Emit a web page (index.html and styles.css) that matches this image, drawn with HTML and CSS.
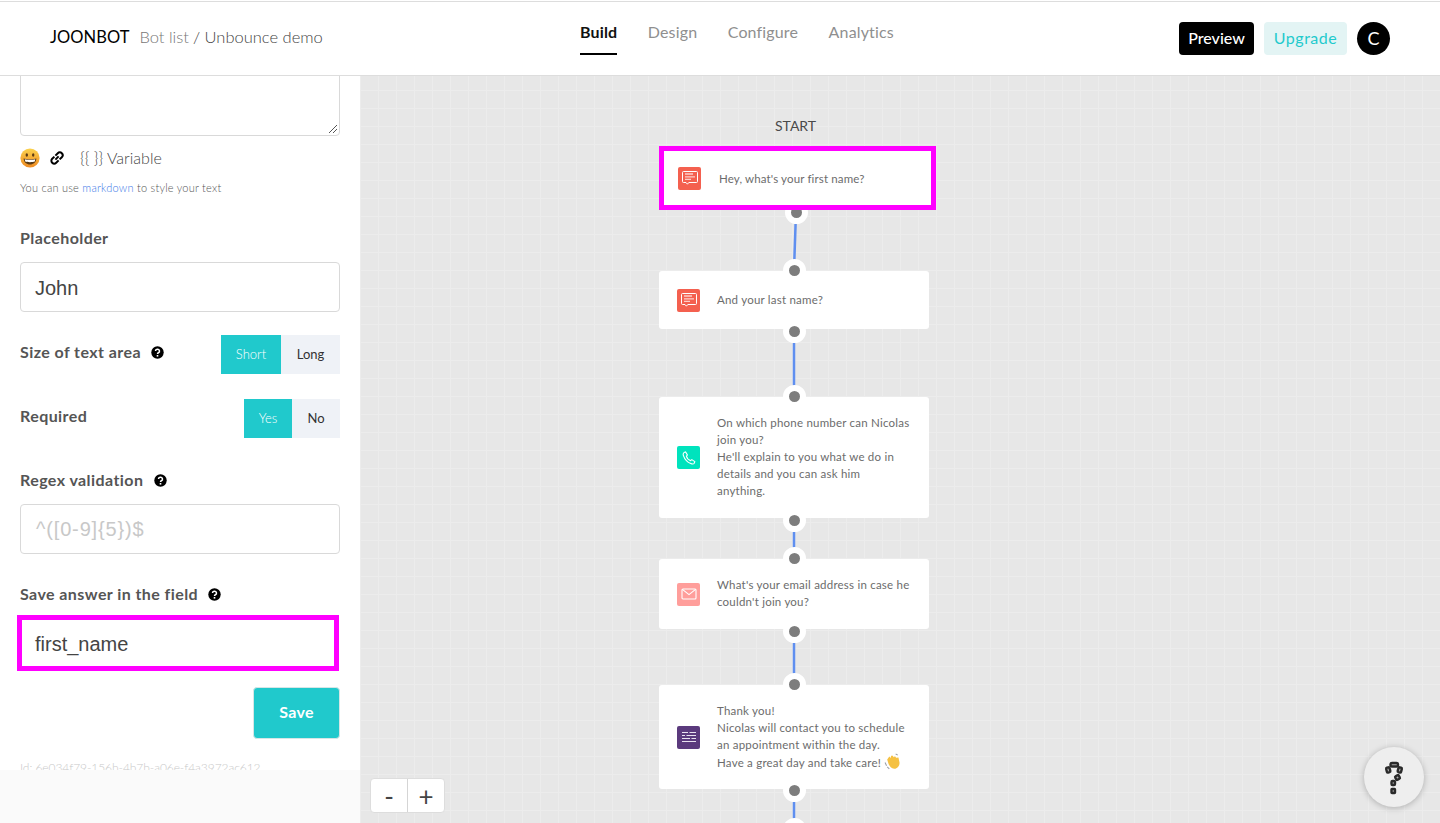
FILE: index.html
```html
<!DOCTYPE html>
<html lang="en">
<head>
<meta charset="utf-8">
<title>Joonbot</title>
<link rel="stylesheet" href="styles.css">
</head>
<body>
<div class="app">
  <header class="topbar">
    <div class="crumbs">
      <span class="brand">JOONBOT</span>
      <span class="crumb-muted">Bot list</span>
      <span class="crumb-path">/ Unbounce demo</span>
    </div>
    <nav class="tabs">
      <a class="tab tab-active">Build</a>
      <a class="tab">Design</a>
      <a class="tab">Configure</a>
      <a class="tab">Analytics</a>
    </nav>
    <div class="actions">
      <button class="btn-preview">Preview</button>
      <button class="btn-upgrade">Upgrade</button>
      <span class="avatar">C</span>
    </div>
  </header>
  <main class="workspace">
    <aside class="sidebar">
      <div class="form">
        <div class="textarea-box">
          <svg class="grip" width="10" height="10" viewBox="0 0 10 10"><path d="M1 9L9 1M5 9L9 5" stroke="#555" stroke-width="1" fill="none"/></svg>
        </div>
        <div class="tools">
          <svg class="emoji" width="20" height="20" viewBox="0 0 20 20">
            <defs><linearGradient id="face" x1="0" y1="0" x2="0" y2="1"><stop offset="0" stop-color="#fbd34e"/><stop offset="1" stop-color="#ee8a22"/></linearGradient></defs>
            <circle cx="10" cy="10" r="9.6" fill="url(#face)"/>
            <ellipse cx="6.8" cy="7" rx="1.2" ry="1.7" fill="#5a3a14"/>
            <ellipse cx="13.2" cy="7" rx="1.2" ry="1.7" fill="#5a3a14"/>
            <path d="M3.6 10.4C6 11.4 14 11.4 16.4 10.4C16.2 14.2 13.4 16.4 10 16.4C6.6 16.4 3.8 14.2 3.6 10.4Z" fill="#5a3a14"/>
            <path d="M4.8 11.2C7 11.9 13 11.9 15.2 11.2L14.8 13.6C12.6 14.3 7.4 14.3 5.2 13.6Z" fill="#fff"/>
          </svg>
          <svg class="link-icon" width="14" height="14" viewBox="0 0 14 14" fill="none" stroke="#000" stroke-width="2"><path d="M5.4 8.6L8.6 5.4"/><path d="M5.4 4.6L7.8 2.2A2.5 2.5 0 0 1 11.8 6.2L9.6 8.4"/><path d="M8.6 9.4L6.2 11.8A2.5 2.5 0 0 1 2.2 7.8L4.4 5.6"/></svg>
          <span class="variable">{{ }} Variable</span>
        </div>
        <p class="hint">You can use <a class="hint-link">markdown</a> to style your text</p>

        <label class="label label-placeholder">Placeholder</label>
        <div class="input input-value">John</div>

        <div class="row row-size">
          <span class="label">Size of text area <svg class="help" width="13" height="13" viewBox="0 0 13 13"><circle cx="6.5" cy="6.5" r="6.2" fill="#000"/><path d="M4.5 5.1A2 1.9 0 1 1 7.4 6.8C6.8 7.1 6.5 7.4 6.5 8" stroke="#fff" stroke-width="1.5" fill="none"/><rect x="5.7" y="9" width="1.6" height="1.6" fill="#fff"/></svg></span>
          <div class="toggle">
            <span class="opt opt-on opt-short">Short</span>
            <span class="opt opt-long">Long</span>
          </div>
        </div>
        <div class="row row-required">
          <span class="label">Required</span>
          <div class="toggle">
            <span class="opt opt-on opt-yes">Yes</span>
            <span class="opt opt-no">No</span>
          </div>
        </div>

        <label class="label label-regex">Regex validation <svg class="help" width="13" height="13" viewBox="0 0 13 13"><circle cx="6.5" cy="6.5" r="6.2" fill="#000"/><path d="M4.5 5.1A2 1.9 0 1 1 7.4 6.8C6.8 7.1 6.5 7.4 6.5 8" stroke="#fff" stroke-width="1.5" fill="none"/><rect x="5.7" y="9" width="1.6" height="1.6" fill="#fff"/></svg></label>
        <div class="input input-ghost">^([0-9]{5})$</div>

        <label class="label label-save">Save answer in the field <svg class="help" width="13" height="13" viewBox="0 0 13 13"><circle cx="6.5" cy="6.5" r="6.2" fill="#000"/><path d="M4.5 5.1A2 1.9 0 1 1 7.4 6.8C6.8 7.1 6.5 7.4 6.5 8" stroke="#fff" stroke-width="1.5" fill="none"/><rect x="5.7" y="9" width="1.6" height="1.6" fill="#fff"/></svg></label>
        <div class="input input-value input-mark">first_name</div>

        <div class="save-row"><button class="btn-save">Save</button></div>
        <p class="bot-id">Id: 6e034f79-156b-4b7b-a06e-f4a3972ac612</p>
      </div>
      <div class="side-foot"></div>
    </aside>

    <section class="canvas">
      <svg class="wires" width="1080" height="747" viewBox="0 0 1080 747" fill="none" stroke="#5f8ff0" stroke-width="2.5">
        <path d="M436 136L434 194"/>
        <path d="M434 255V320"/>
        <path d="M434 444V482"/>
        <path d="M434 555V608"/>
        <path d="M434 715V747"/>
      </svg>

      <div class="start">START</div>

      <article class="node node-1 node-mark">
        <span class="ico ico-red"><svg width="16" height="16" viewBox="0 0 16 16" fill="none" stroke="#fff"><path d="M1.5 1.5H14.5A1 1 0 0 1 15.5 2.5V11.5A1 1 0 0 1 14.5 12.5H6.8L5.4 14.2L4 12.5H1.5A1 1 0 0 1 .5 11.5V2.5A1 1 0 0 1 1.5 1.5Z"/><path d="M3 4H11M3 6.8H13M3 9.4H9" stroke-width="1.3" stroke-opacity=".7"/></svg></span>
        <p>Hey, what's your first name?</p>
      </article>
      <article class="node node-2">
        <span class="ico ico-red"><svg width="16" height="16" viewBox="0 0 16 16" fill="none" stroke="#fff"><path d="M1.5 1.5H14.5A1 1 0 0 1 15.5 2.5V11.5A1 1 0 0 1 14.5 12.5H6.8L5.4 14.2L4 12.5H1.5A1 1 0 0 1 .5 11.5V2.5A1 1 0 0 1 1.5 1.5Z"/><path d="M3 4H11M3 6.8H13M3 9.4H9" stroke-width="1.3" stroke-opacity=".7"/></svg></span>
        <p>And your last name?</p>
      </article>
      <article class="node node-3">
        <span class="ico ico-green"><svg width="14" height="14" viewBox="0 0 14 14" fill="none" stroke="#fff" stroke-width="1.1"><path d="M2 1.6L3.6 1L5.4 4L4.4 5.2C4.8 6.8 6.6 9 8.6 9.6L9.8 8.6L12.8 10.6L12.2 12.2C11.6 13.2 10.2 13.2 8.8 12.6C5.4 11.2 2.6 8 1.4 4.6C1 3.4 1.2 2.2 2 1.6Z"/></svg></span>
        <p>On which phone number can Nicolas join you?<br>He'll explain to you what we do in details and you can ask him<br>anything.</p>
      </article>
      <article class="node node-4">
        <span class="ico ico-pink"><svg width="16" height="12" viewBox="0 0 16 12" fill="none" stroke="#fff" stroke-width="1.1"><rect x="1" y="1" width="14" height="10" rx="1"/><path d="M1.4 1.4L8 6.6L14.6 1.4"/></svg></span>
        <p>What's your email address in case he couldn't join you?</p>
      </article>
      <article class="node node-5">
        <span class="ico ico-purple"><svg width="14" height="12" viewBox="0 0 14 12" stroke="#e9e2f0" stroke-width="1"><path d="M0 1.5H6M7.5 1.5H14M0 4.5H3M4.5 4.5H14M0 7.5H8M9.5 7.5H14M0 10.5H14"/></svg></span>
        <p>Thank you!<br>Nicolas will contact you to schedule an appointment within the day.<br>Have a great day and take care! <svg class="wave" width="17" height="17" viewBox="0 0 16 16"><path d="M3 6L5 3.4L6.4 4.6L6.6 2.6L8.4 2.6L9 4L10.4 3L11.4 4.4L13.6 4.2L14.6 9C14.8 12.4 12.2 15 9.6 14.8C7 14.6 5.4 12.6 4.4 10.6Z" fill="#f5c142"/><path d="M1 9L2.4 12M3 13L5 15M11 1L13 2" stroke="#9aa0a8" fill="none"/></svg></p>
      </article>

      <span class="port port-a"></span>
      <span class="port port-b"></span>
      <span class="port port-c"></span>
      <span class="port port-d"></span>
      <span class="port port-e"></span>
      <span class="port port-f"></span>
      <span class="port port-g"></span>
      <span class="port port-h"></span>
      <span class="port port-i"></span>
      <span class="port port-j"></span>

      <div class="zoom">
        <button class="zoom-btn">-</button>
        <button class="zoom-btn">+</button>
      </div>

      <button class="help-fab" aria-label="Help">
        <svg width="60" height="60" viewBox="0 0 60 60" fill="#aaa" stroke="#2a2a2a" stroke-width="2.4">
          <rect x="22.5" y="20.5" width="3.5" height="5" rx="1" transform="rotate(-15 24 23)"/>
          <rect x="26.5" y="16" width="7.5" height="3.5" rx="1.5"/>
          <rect x="34" y="20.5" width="3.5" height="5" rx="1" transform="rotate(15 36 23)"/>
          <rect x="31.5" y="28.5" width="4" height="4" rx="1" transform="rotate(-30 33.5 30.5)"/>
          <rect x="27.5" y="34" width="3.5" height="4" rx="1"/>
          <rect x="27.5" y="42" width="3.5" height="4" rx=".5"/>
        </svg>
      </button>
    </section>
  </main>
</div>
</body>
</html>
```
FILE: styles.css
```css
* { box-sizing: border-box; }
html, body { margin: 0; padding: 0; height: 100%; overflow: hidden; }
body { font-family: Lato, "Noto Sans", sans-serif; color: #4a4a4a; background: #fff; }
p { margin: 0; }
button { font-family: inherit; border: 0; cursor: pointer; padding: 0; }

.app { height: 823px; display: flex; flex-direction: column; padding-top: 1px; }

.topbar { height: 75px; flex: none; display: flex; align-items: center; padding: 0 50px; border-top: 1px solid #ddd; border-bottom: 1px solid #ddd; background: #fff; }
.crumbs { display: flex; align-items: center; gap: 5px; width: 530px; font-size: 16.5px; font-weight: 300; margin-top: -3px; }
.brand { color: #000; font-weight: 400; margin-right: 5px; letter-spacing: .05px; }
.crumb-muted { color: #777; }
.crumb-path { color: #444; margin-left: -1px; }
.tabs { display: flex; gap: 30.5px; font-size: 16px; letter-spacing: .15px; margin-top: -6px; }
.tab { color: #8f8f8f; padding: 6px 0 12px; border-bottom: 2px solid transparent; }
.tab-active { color: #111; font-weight: 700; border-bottom-color: #000; }
.actions { margin-left: auto; display: flex; align-items: center; gap: 10px; margin-top: -1px; }
.btn-preview { width: 75px; height: 33px; padding-bottom: 2px; background: #000; color: #fff; font-size: 16px; font-weight: 500; border-radius: 4px; }
.btn-upgrade { width: 83px; height: 33px; padding-bottom: 2px; background: #e3f4f4; color: #1fcacd; font-size: 16px; letter-spacing: .5px; border-radius: 4px; }
.avatar { width: 33px; height: 33px; border-radius: 50%; background: #000; color: #fff; display: flex; align-items: center; justify-content: center; font-size: 18px; }

.workspace { flex: 1; display: flex; min-height: 0; }

.sidebar { width: 360px; flex: none; display: flex; flex-direction: column; background: #fff; }
.form { flex: 1; min-height: 0; overflow: hidden; padding: 0 20px; }
.side-foot { height: 53px; flex: none; background: #fafafa; }

.textarea-box { position: relative; height: 61px; margin-top: -1px; border: 1px solid #d9d9d9; border-radius: 0 0 4px 4px; }
.grip { position: absolute; right: 1px; bottom: 1px; }
.tools { display: flex; align-items: center; height: 21px; margin-top: 11px; }
.emoji { flex: none; }
.link-icon { margin-left: 10px; flex: none; }
.variable { margin-left: 16px; font-size: 16px; font-weight: 300; color: #444; }
.hint { margin-top: 13px; font-size: 11px; line-height: 14px; color: #555; font-weight: 300; letter-spacing: .23px; }
.hint-link { color: #3b78e7; }

.label { display: block; font-size: 16px; font-weight: 700; color: #555; line-height: 20px; letter-spacing: .42px; }
.help { margin-left: 6px; vertical-align: -1px; }
.label-placeholder { margin-top: 33px; }
.input { height: 50px; margin-top: 14px; padding: 2px 14px 0; border: 1px solid #d9d9d9; border-radius: 4px; display: flex; align-items: center; font-family: "Liberation Sans", Arial, sans-serif; font-size: 20px; }
.input-value { color: #444; }
.input-ghost { color: #c8c8c8; letter-spacing: .85px; padding-left: 15px; padding-top: 0; }
.input-mark { margin-left: -3px; margin-right: 1px; margin-top: 11px; height: 56px; padding-left: 13px; border: 5px solid #ff00ff; border-radius: 0; }

.row { display: flex; align-items: center; justify-content: space-between; }
.row .label { margin-bottom: 5px; }
.row-size { margin-top: 23px; }
.row-required { margin-top: 25px; }
.toggle { display: flex; height: 39px; font-size: 13px; }
.opt { display: flex; align-items: center; justify-content: center; padding-bottom: 2px; background: #eff2f7; color: #333; }
.opt-on { background: #20c9cc; color: #fff; font-weight: 300; }
.opt-short { width: 60px; }
.opt-long { width: 59px; }
.opt-yes, .opt-no { width: 48px; }
.label-regex { margin-top: 32px; }
.input-ghost { margin-top: 14px; }
.label-save { margin-top: 30px; }

.save-row { display: flex; justify-content: flex-end; margin-top: 16px; }
.btn-save { width: 87px; height: 52px; padding-bottom: 4px; background: #20c9cc; color: #fff; font-size: 16px; font-weight: 700; letter-spacing: .3px; border-radius: 4px; border: 1px solid #d6e6e6; }
.bot-id { margin-top: 22px; font-size: 12px; line-height: 14px; color: #c9c9c9; font-weight: 300; letter-spacing: -.07px; white-space: nowrap; }

.canvas { position: relative; flex: 1; overflow: hidden; background-color: #e7e7e7; background-image: linear-gradient(to right, #ececec 1px, transparent 1px), linear-gradient(to bottom, #ececec 1px, transparent 1px); background-size: 18px 18px; background-position: 0 -4px; }
.wires { position: absolute; left: 0; top: 0; }
.start { position: absolute; left: 415px; top: 41px; font-size: 14px; color: #4a4a4a; }

.node { position: absolute; left: 299px; width: 270px; display: flex; align-items: center; padding: 0 18px; background: #fff; border-radius: 3px; font-size: 11.5px; line-height: 17px; letter-spacing: .22px; color: #6c6c6c; }
.node p { margin: -2px 0 0 17px; flex: 1; }
.node-1 { left: 299px; top: 70px; width: 277px; height: 64px; padding-left: 14px; border: 5px solid #ff00ff; border-radius: 0; letter-spacing: .14px; z-index: 2; }
.node-1 p { margin: 0 0 0 18px; }
.node-2 { top: 195px; height: 58px; }
.node-3 { top: 321px; height: 121px; }
.node-4 { top: 483px; height: 70px; }
.node-5 { top: 609px; height: 104px; }
.ico { width: 23px; height: 23px; flex: none; border-radius: 2px; display: flex; align-items: center; justify-content: center; }
.ico-red { background: #f4604f; }
.ico-green { background: #00e3bd; }
.ico-pink { background: #ff9e9b; }
.ico-purple { background: #5b3a7d; }
.wave { vertical-align: -3px; }

.port { position: absolute; width: 23px; height: 23px; margin: -11.5px 0 0 -11.5px; border-radius: 50%; background: #7d7d7d; border: 6px solid #fff; }
.port-a { left: 436px; top: 136px; }
.port-b { left: 434px; top: 194px; }
.port-c { left: 434px; top: 255px; }
.port-d { left: 434px; top: 320px; }
.port-e { left: 434px; top: 444px; }
.port-f { left: 434px; top: 482px; }
.port-g { left: 434px; top: 555px; }
.port-h { left: 434px; top: 608px; }
.port-i { left: 434px; top: 714px; }
.port-j { left: 434px; top: 753px; }

.zoom { position: absolute; left: 10px; top: 702px; display: flex; width: 75px; height: 35px; background: #fff; border: 1px solid #ddd; border-radius: 4px; }
.zoom-btn { flex: 1; background: transparent; font-size: 26px; line-height: 30px; color: #444; }
.zoom-btn + .zoom-btn { border-left: 1px solid #d5d5d5; }

.help-fab { position: absolute; left: 1004px; top: 671px; width: 60px; height: 60px; border-radius: 50%; background: #eee; box-shadow: 0 1px 6px rgba(0,0,0,.25); }
.help-fab svg { display: block; }
```
